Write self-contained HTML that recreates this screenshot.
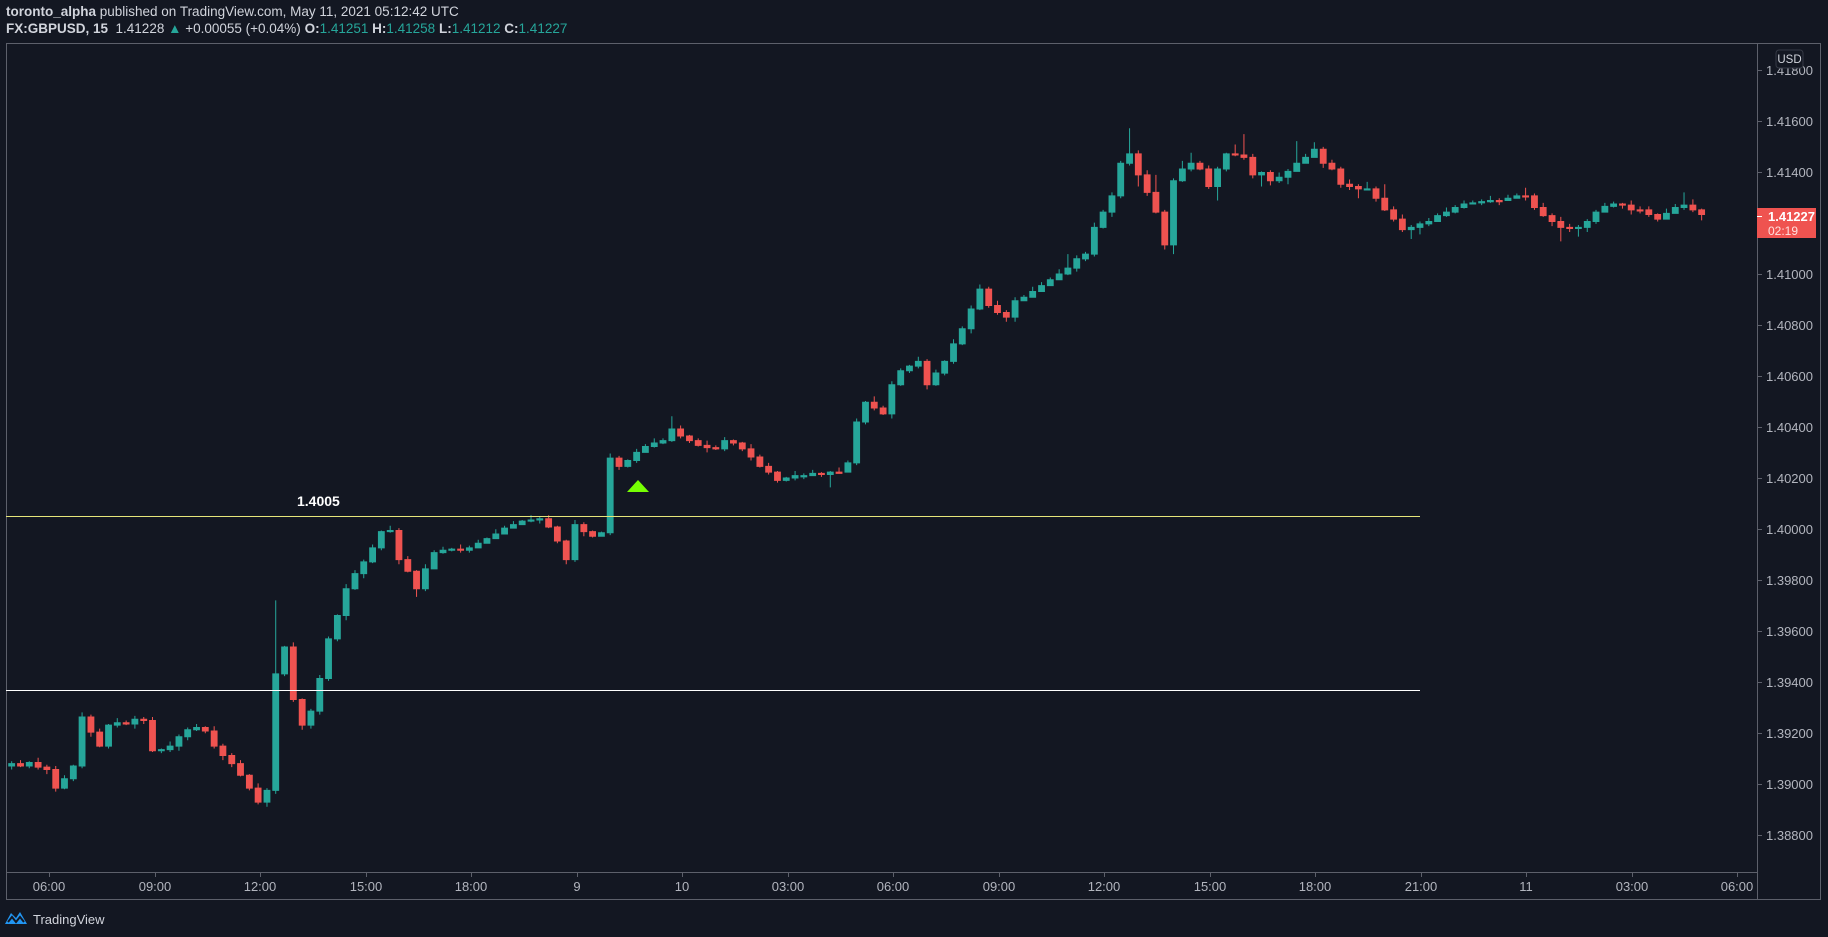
<!DOCTYPE html>
<html><head><meta charset="utf-8"><style>
html,body{margin:0;padding:0;background:#131722;width:1828px;height:937px;overflow:hidden;font-family:"Liberation Sans",sans-serif;}
.h{position:absolute;left:6px;color:#d1d4dc;font-size:13.5px;white-space:nowrap}
.g{color:#26a69a}
svg{position:absolute;left:0;top:0}
.u{fill:#26a69a;stroke:#26a69a;stroke-width:.86}
.d{fill:#ef5350;stroke:#ef5350;stroke-width:.86}
</style></head><body>
<div class="h" style="top:4px"><b>toronto_alpha</b> published on TradingView.com, May 11, 2021 05:12:42 UTC</div>
<div class="h" style="top:21px"><b>FX:GBPUSD, 15</b>&nbsp; 1.41228 <span class="g">▲</span> +0.00055 (+0.04%) <b>O:</b><span class="g">1.41251</span> <b>H:</b><span class="g">1.41258</span> <b>L:</b><span class="g">1.41212</span> <b>C:</b><span class="g">1.41227</span></div>
<svg width="1828" height="937" xmlns="http://www.w3.org/2000/svg" font-family="Liberation Sans, sans-serif">
<rect x="6.5" y="43.5" width="1814" height="856" fill="none" stroke="#5d606b"/>
<line x1="1757.5" y1="43" x2="1757.5" y2="900" stroke="#5d606b"/>
<line x1="6" y1="872.5" x2="1757" y2="872.5" stroke="#5d606b"/>
<g transform="scale(1.16582)">
<path class="u" d="M10 653V660M7.5 655h5v2h-5z"/>
<path class="d" d="M17.6 652V658M15.1 655h5v2h-5z"/>
<path class="u" d="M25.1 653V659M22.6 654h5v3h-5z"/>
<path class="d" d="M32.7 650V660M30.2 654h5v4h-5z"/>
<path class="d" d="M40.2 656V664M37.7 658h5v2h-5z"/>
<path class="d" d="M47.8 657V679M45.3 660h5v16h-5z"/>
<path class="u" d="M55.3 665V677M52.8 668h5v8h-5z"/>
<path class="u" d="M62.9 656V670M60.4 657h5v11h-5z"/>
<path class="u" d="M70.4 611V659M67.9 615h5v42h-5z"/>
<path class="d" d="M78 613V632M75.5 615h5v13h-5z"/>
<path class="d" d="M85.5 625V641M83 628h5v12h-5z"/>
<path class="u" d="M93.1 621V642M90.6 622h5v18h-5z"/>
<path class="u" d="M100.6 616V624M98.1 620h5v2h-5z"/>
<path class="d" d="M108.2 618V622M105.7 620h5v1h-5z"/>
<path class="u" d="M115.7 614V625M113.2 617h5v4h-5z"/>
<path class="d" d="M123.3 615V621M120.8 617h5v1h-5z"/>
<path class="d" d="M130.8 615V645M128.3 618h5v26h-5z"/>
<path class="u" d="M138.4 642V646M135.9 643h5v1h-5z"/>
<path class="u" d="M145.9 636V645M143.4 640h5v3h-5z"/>
<path class="u" d="M153.5 630V644M151 632h5v8h-5z"/>
<path class="u" d="M161 624V635M158.5 626h5v6h-5z"/>
<path class="u" d="M168.6 621V627M166.1 624h5v2h-5z"/>
<path class="d" d="M176.1 623V629M173.6 624h5v3h-5z"/>
<path class="d" d="M183.7 623V642M181.2 627h5v13h-5z"/>
<path class="d" d="M191.2 638V652M188.7 640h5v8h-5z"/>
<path class="d" d="M198.8 646V658M196.3 648h5v7h-5z"/>
<path class="d" d="M206.3 652V666M203.8 655h5v10h-5z"/>
<path class="d" d="M213.9 664V678M211.4 665h5v11h-5z"/>
<path class="d" d="M221.4 672V690M218.9 676h5v12h-5z"/>
<path class="u" d="M229 676V692M226.5 678h5v10h-5z"/>
<path class="u" d="M236.5 515V681M234 578h5v100h-5z"/>
<path class="u" d="M244.1 554V580M241.6 555h5v23h-5z"/>
<path class="d" d="M251.6 551V602M249.1 555h5v45h-5z"/>
<path class="d" d="M259.2 599V626M256.7 600h5v22h-5z"/>
<path class="u" d="M266.7 608V625M264.2 610h5v12h-5z"/>
<path class="u" d="M274.3 579V613M271.8 582h5v28h-5z"/>
<path class="u" d="M281.8 546V584M279.3 548h5v34h-5z"/>
<path class="u" d="M289.4 527V550M286.9 528h5v20h-5z"/>
<path class="u" d="M296.9 501V532M294.4 505h5v23h-5z"/>
<path class="u" d="M304.5 489V506M302 492h5v13h-5z"/>
<path class="u" d="M312 480V496M309.5 482h5v10h-5z"/>
<path class="u" d="M319.6 467V483M317.1 470h5v12h-5z"/>
<path class="u" d="M327.1 455V472M324.6 456h5v14h-5z"/>
<path class="u" d="M334.7 451V457M332.2 455h5v1h-5z"/>
<path class="d" d="M342.2 453V484M339.7 455h5v25h-5z"/>
<path class="d" d="M349.8 477V491M347.3 480h5v10h-5z"/>
<path class="d" d="M357.3 489V512M354.8 490h5v15h-5z"/>
<path class="u" d="M364.9 484V507M362.4 488h5v17h-5z"/>
<path class="u" d="M372.4 472V478M369.9 474h5v14h-5z"/>
<path class="u" d="M380 469V475M377.5 472h5v2h-5z"/>
<path class="u" d="M387.5 470V473M385 471h5v1h-5z"/>
<path class="d" d="M395.1 467V474M392.6 471h5v1h-5z"/>
<path class="u" d="M402.6 468V474M400.1 470h5v2h-5z"/>
<path class="u" d="M410.2 463V467M407.7 466h5v4h-5z"/>
<path class="u" d="M417.7 461V464M415.2 462h5v4h-5z"/>
<path class="u" d="M425.3 454V460M422.8 458h5v4h-5z"/>
<path class="u" d="M432.8 451V457M430.3 453h5v5h-5z"/>
<path class="u" d="M440.4 447V451M437.9 450h5v3h-5z"/>
<path class="u" d="M447.9 446V449M445.4 447h5v3h-5z"/>
<path class="u" d="M455.5 442V448M453 446h5v1h-5z"/>
<path class="u" d="M463 443V449M460.5 445h5v1h-5z"/>
<path class="d" d="M470.6 442V453M468.1 445h5v7h-5z"/>
<path class="d" d="M478.1 451V466M475.6 452h5v12h-5z"/>
<path class="d" d="M485.7 463V484M483.2 464h5v16h-5z"/>
<path class="u" d="M493.2 446V482M490.7 450h5v30h-5z"/>
<path class="d" d="M500.8 448V460M498.3 450h5v6h-5z"/>
<path class="d" d="M508.3 455V461M505.8 456h5v4h-5z"/>
<path class="u" d="M515.9 456V459M513.4 457h5v3h-5z"/>
<path class="u" d="M523.4 389V459M520.9 393h5v64h-5z"/>
<path class="d" d="M531 391V403M528.5 393h5v7h-5z"/>
<path class="u" d="M538.5 394V401M536 395h5v5h-5z"/>
<path class="u" d="M546.1 385V397M543.6 388h5v7h-5z"/>
<path class="u" d="M553.6 381V387M551.1 383h5v5h-5z"/>
<path class="u" d="M561.2 376V384M558.7 380h5v3h-5z"/>
<path class="u" d="M568.7 376V381M566.2 378h5v2h-5z"/>
<path class="u" d="M576.3 357V379M573.8 368h5v10h-5z"/>
<path class="d" d="M583.8 365V376M581.3 368h5v6h-5z"/>
<path class="d" d="M591.4 373V380M588.9 374h5v4h-5z"/>
<path class="d" d="M598.9 376V383M596.4 378h5v4h-5z"/>
<path class="d" d="M606.5 378V388M604 382h5v2h-5z"/>
<path class="d" d="M614 382V386M611.5 384h5v1h-5z"/>
<path class="u" d="M621.6 375V387M619.1 378h5v7h-5z"/>
<path class="d" d="M629.1 377V382M626.6 378h5v2h-5z"/>
<path class="d" d="M636.7 379V387M634.2 380h5v5h-5z"/>
<path class="d" d="M644.2 381V395M641.7 385h5v7h-5z"/>
<path class="d" d="M651.8 390V401M649.3 392h5v8h-5z"/>
<path class="d" d="M659.3 397V407M656.8 400h5v5h-5z"/>
<path class="d" d="M666.9 404V414M664.4 405h5v7h-5z"/>
<path class="u" d="M674.4 409V413M671.9 410h5v2h-5z"/>
<path class="u" d="M682 404V412M679.5 408h5v2h-5z"/>
<path class="u" d="M689.5 406V411M687 408h5v1h-5z"/>
<path class="u" d="M697.1 403V407M694.6 406h5v2h-5z"/>
<path class="d" d="M704.6 405V409M702.1 406h5v1h-5z"/>
<path class="u" d="M712.2 404V418M709.7 405h5v2h-5z"/>
<path class="d" d="M719.7 401V406M717.2 405h5v1h-5z"/>
<path class="u" d="M727.3 395V401M724.8 397h5v8h-5z"/>
<path class="u" d="M734.8 359V399M732.3 362h5v35h-5z"/>
<path class="u" d="M742.4 344V364M739.9 345h5v17h-5z"/>
<path class="d" d="M749.9 340V352M747.4 345h5v5h-5z"/>
<path class="d" d="M757.5 348V356M755 350h5v5h-5z"/>
<path class="u" d="M765 327V359M762.5 330h5v25h-5z"/>
<path class="u" d="M772.6 316V331M770.1 318h5v12h-5z"/>
<path class="u" d="M780.1 313V320M777.6 314h5v4h-5z"/>
<path class="u" d="M787.7 306V316M785.2 310h5v4h-5z"/>
<path class="d" d="M795.2 308V334M792.7 310h5v20h-5z"/>
<path class="u" d="M802.8 317V331M800.3 320h5v10h-5z"/>
<path class="u" d="M810.3 309V322M807.8 310h5v10h-5z"/>
<path class="u" d="M817.9 291V312M815.4 295h5v15h-5z"/>
<path class="u" d="M825.4 280V296M822.9 282h5v13h-5z"/>
<path class="u" d="M833 262V286M830.5 265h5v17h-5z"/>
<path class="u" d="M840.5 244V266M838 248h5v17h-5z"/>
<path class="d" d="M848.1 246V264M845.6 248h5v14h-5z"/>
<path class="d" d="M855.6 258V270M853.1 262h5v6h-5z"/>
<path class="d" d="M863.2 266V276M860.7 268h5v4h-5z"/>
<path class="u" d="M870.7 255V276M868.2 258h5v14h-5z"/>
<path class="u" d="M878.3 253V258M875.8 255h5v3h-5z"/>
<path class="u" d="M885.8 246V252M883.3 250h5v5h-5z"/>
<path class="u" d="M893.4 242V247M890.9 245h5v5h-5z"/>
<path class="u" d="M900.9 238V244M898.4 240h5v5h-5z"/>
<path class="u" d="M908.5 231V237M906 235h5v5h-5z"/>
<path class="u" d="M916 218V236M913.5 230h5v5h-5z"/>
<path class="u" d="M923.6 219V233M921.1 222h5v8h-5z"/>
<path class="u" d="M931.1 216V224M928.6 218h5v4h-5z"/>
<path class="u" d="M938.7 191V220M936.2 195h5v23h-5z"/>
<path class="u" d="M946.2 180V196M943.7 182h5v13h-5z"/>
<path class="u" d="M953.8 165V186M951.3 168h5v14h-5z"/>
<path class="u" d="M961.3 138V170M958.8 140h5v28h-5z"/>
<path class="u" d="M968.9 110V142M966.4 132h5v8h-5z"/>
<path class="d" d="M976.4 129V160M973.9 132h5v18h-5z"/>
<path class="d" d="M984 146V168M981.5 150h5v15h-5z"/>
<path class="d" d="M991.5 150V183M989 165h5v17h-5z"/>
<path class="d" d="M999.1 180V214M996.6 182h5v28h-5z"/>
<path class="u" d="M1006.6 153V218M1004.1 155h5v55h-5z"/>
<path class="u" d="M1014.2 138V156M1011.7 145h5v10h-5z"/>
<path class="u" d="M1021.7 131V147M1019.2 140h5v5h-5z"/>
<path class="d" d="M1029.3 138V146M1026.8 140h5v5h-5z"/>
<path class="d" d="M1036.8 142V162M1034.3 145h5v15h-5z"/>
<path class="u" d="M1044.4 143V172M1041.9 145h5v15h-5z"/>
<path class="u" d="M1051.9 131V147M1049.4 132h5v13h-5z"/>
<path class="d" d="M1059.5 124V134M1057 132h5v1h-5z"/>
<path class="d" d="M1067 115V137M1064.5 133h5v2h-5z"/>
<path class="d" d="M1074.6 132V153M1072.1 135h5v15h-5z"/>
<path class="u" d="M1082.1 147V160M1079.6 148h5v2h-5z"/>
<path class="d" d="M1089.7 146V159M1087.2 148h5v7h-5z"/>
<path class="u" d="M1097.2 148V157M1094.7 152h5v3h-5z"/>
<path class="u" d="M1104.8 145V158M1102.3 147h5v5h-5z"/>
<path class="u" d="M1112.3 121V142M1109.8 140h5v7h-5z"/>
<path class="u" d="M1119.9 132V137M1117.4 135h5v5h-5z"/>
<path class="u" d="M1127.4 122V130M1124.9 128h5v7h-5z"/>
<path class="d" d="M1135 126V144M1132.5 128h5v12h-5z"/>
<path class="d" d="M1142.5 137V146M1140 140h5v5h-5z"/>
<path class="d" d="M1150.1 143V161M1147.6 145h5v13h-5z"/>
<path class="d" d="M1157.6 154V163M1155.1 158h5v2h-5z"/>
<path class="d" d="M1165.2 158V170M1162.7 160h5v2h-5z"/>
<path class="u" d="M1172.7 156V163M1170.2 162h5v1h-5z"/>
<path class="d" d="M1180.3 160V173M1177.8 162h5v8h-5z"/>
<path class="d" d="M1187.8 158V181M1185.3 170h5v10h-5z"/>
<path class="d" d="M1195.4 177V190M1192.9 180h5v8h-5z"/>
<path class="d" d="M1202.9 184V199M1200.4 188h5v9h-5z"/>
<path class="u" d="M1210.5 193V205M1208 195h5v2h-5z"/>
<path class="u" d="M1218 190V201M1215.5 192h5v3h-5z"/>
<path class="u" d="M1225.6 187V194M1223.1 190h5v2h-5z"/>
<path class="u" d="M1233.1 183V187M1230.6 185h5v5h-5z"/>
<path class="u" d="M1240.7 178V186M1238.2 182h5v3h-5z"/>
<path class="u" d="M1248.2 176V183M1245.7 178h5v4h-5z"/>
<path class="u" d="M1255.8 172V179M1253.3 175h5v3h-5z"/>
<path class="u" d="M1263.3 172V175M1260.8 174h5v1h-5z"/>
<path class="u" d="M1270.9 171V176M1268.4 173h5v1h-5z"/>
<path class="u" d="M1278.4 168V174M1275.9 172h5v1h-5z"/>
<path class="d" d="M1286 170V176M1283.5 172h5v1h-5z"/>
<path class="u" d="M1293.5 167V171M1291 170h5v2h-5z"/>
<path class="u" d="M1301.1 166V170M1298.6 168h5v2h-5z"/>
<path class="d" d="M1308.6 161V172M1306.1 168h5v1h-5z"/>
<path class="d" d="M1316.2 166V180M1313.7 168h5v10h-5z"/>
<path class="d" d="M1323.7 174V186M1321.2 178h5v7h-5z"/>
<path class="d" d="M1331.3 183V194M1328.8 185h5v5h-5z"/>
<path class="d" d="M1338.8 186V207M1336.3 190h5v5h-5z"/>
<path class="d" d="M1346.4 192V199M1343.9 195h5v1h-5z"/>
<path class="u" d="M1353.9 193V203M1351.4 195h5v1h-5z"/>
<path class="u" d="M1361.5 188V199M1359 190h5v5h-5z"/>
<path class="u" d="M1369 180V192M1366.5 182h5v8h-5z"/>
<path class="u" d="M1376.6 174V178M1374.1 177h5v5h-5z"/>
<path class="u" d="M1384.1 173V178M1381.6 175h5v2h-5z"/>
<path class="d" d="M1391.7 174V179M1389.2 175h5v1h-5z"/>
<path class="d" d="M1399.2 172V184M1396.7 176h5v4h-5z"/>
<path class="d" d="M1406.8 177V183M1404.3 180h5v1h-5z"/>
<path class="d" d="M1414.3 177V186M1411.8 180h5v4h-5z"/>
<path class="d" d="M1421.9 183V190M1419.4 184h5v4h-5z"/>
<path class="u" d="M1429.4 179V188M1426.9 183h5v5h-5z"/>
<path class="u" d="M1437 175V180M1434.5 178h5v5h-5z"/>
<path class="u" d="M1444.5 165V180M1442 176h5v2h-5z"/>
<path class="d" d="M1452.1 171V182M1449.6 176h5v4h-5z"/>
<path class="d" d="M1459.6 179V189M1457.1 180h5v4h-5z"/>
</g>
<line x1="6" y1="516.5" x2="1420" y2="516.5" stroke="#e6e67a"/>
<line x1="6" y1="690.5" x2="1420" y2="690.5" stroke="#ffffff"/>
<text x="297" y="506" fill="#fff" font-size="14" font-weight="bold">1.4005</text>
<polygon points="627,492 638,480 649,492" fill="#76ff03"/>
<g fill="#b2b5be" font-size="13" stroke="#5d606b">
<path d="M1757 70.5h5M1757 121.5h5M1757 172.5h5M1757 223.5h5M1757 274.5h5M1757 325.5h5M1757 376.5h5M1757 427.5h5M1757 478.5h5M1757 529.5h5M1757 580.5h5M1757 631.5h5M1757 682.5h5M1757 733.5h5M1757 784.5h5M1757 835.5h5"/>
<path d="M49.5 872v5M155.5 872v5M260.5 872v5M366.5 872v5M471.5 872v5M577.5 872v5M682.5 872v5M788.5 872v5M893.5 872v5M999.5 872v5M1104.5 872v5M1210.5 872v5M1315.5 872v5M1421.5 872v5M1526.5 872v5M1632.5 872v5M1737.5 872v5"/>
</g>
<g fill="#b2b5be" font-size="13">
<text x="1766" y="75">1.41800</text><text x="1766" y="126">1.41600</text><text x="1766" y="177">1.41400</text><text x="1766" y="228">1.41200</text><text x="1766" y="279">1.41000</text><text x="1766" y="330">1.40800</text><text x="1766" y="381">1.40600</text><text x="1766" y="432">1.40400</text><text x="1766" y="483">1.40200</text><text x="1766" y="534">1.40000</text><text x="1766" y="585">1.39800</text><text x="1766" y="636">1.39600</text><text x="1766" y="687">1.39400</text><text x="1766" y="738">1.39200</text><text x="1766" y="789">1.39000</text><text x="1766" y="840">1.38800</text>
</g>
<g fill="#b2b5be" font-size="13" text-anchor="middle">
<text x="49" y="891">06:00</text><text x="155" y="891">09:00</text><text x="260" y="891">12:00</text><text x="366" y="891">15:00</text><text x="471" y="891">18:00</text><text x="577" y="891">9</text><text x="682" y="891">10</text><text x="788" y="891">03:00</text><text x="893" y="891">06:00</text><text x="999" y="891">09:00</text><text x="1104" y="891">12:00</text><text x="1210" y="891">15:00</text><text x="1315" y="891">18:00</text><text x="1421" y="891">21:00</text><text x="1526" y="891">11</text><text x="1632" y="891">03:00</text><text x="1737" y="891">06:00</text>
</g>
<rect x="1776" y="50" width="27" height="18" rx="3" fill="#131722" stroke="#363a45"/>
<text x="1789.5" y="63" fill="#d1d4dc" font-size="11.5" text-anchor="middle">USD</text>
<rect x="1757" y="208" width="59" height="30" fill="#ef5350"/>
<line x1="1757" y1="216.5" x2="1762" y2="216.5" stroke="#fff"/>
<text x="1768" y="221" fill="#fff" font-size="13" font-weight="bold">1.41227</text>
<text x="1768" y="235" fill="#ffe0de" font-size="12">02:19</text>
<g transform="translate(5,910)">
<path d="M0 14 L6 3 L11 8 L15 2 L22 14 Z" fill="#2196f3"/>
<path d="M3 12 L7 7 L11 12 L15 7 L19 12" fill="none" stroke="#131722" stroke-width="2"/>
</g>
<text x="33" y="924" fill="#d1d4dc" font-size="13">TradingView</text>
</svg>
</body></html>
